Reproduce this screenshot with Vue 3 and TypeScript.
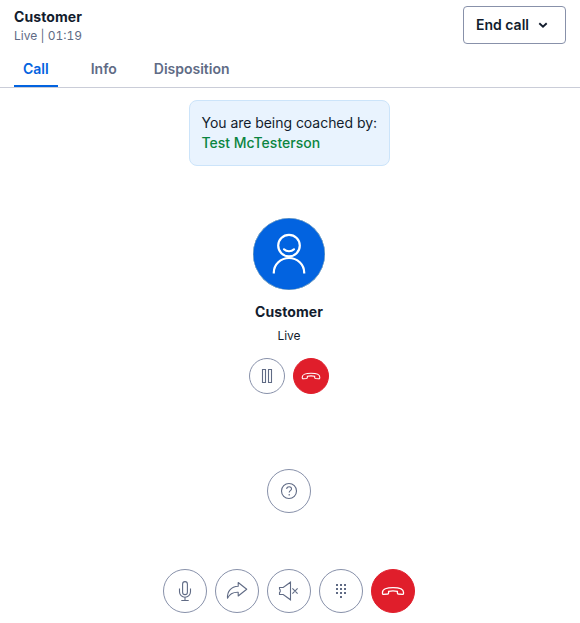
<script setup lang="ts">
import { ref } from 'vue'

const tabs: string[] = ['Call', 'Info', 'Disposition']
const activeTab = ref<string>('Call')
</script>

<template>
  <main class="panel">
    <header class="header">
      <div class="caller">
        <div class="caller-name">Customer</div>
        <div class="caller-status">Live | 01:19</div>
      </div>
      <button class="end-call" type="button">
        <span>End call</span>
        <svg width="10" height="8" viewBox="0 0 10 8" fill="none" stroke="currentColor" stroke-width="1.9">
          <path d="M1.3 2.2 5 5.6 8.7 2.2" />
        </svg>
      </button>
    </header>

    <nav class="tabs">
      <button
        v-for="tab in tabs"
        :key="tab"
        type="button"
        class="tab"
        :class="{ active: tab === activeTab }"
        @click="activeTab = tab"
      >{{ tab }}</button>
    </nav>

    <section class="body">
      <div class="notice">
        <div class="notice-text">You are being coached by:</div>
        <div class="coach">Test McTesterson</div>
      </div>

      <div class="avatar">
        <svg width="72" height="72" viewBox="0 0 72 72" fill="none" stroke="#fff" stroke-width="2.2">
          <circle cx="36" cy="27.6" r="10.8" />
          <path d="M31 31.3c2.6 2.6 7.4 2.6 10 0" stroke-linecap="round" />
          <path d="M20.8 55.6v-1a15.2 14.6 0 0 1 30.4 0v1" />
        </svg>
      </div>
      <div class="name">Customer</div>
      <div class="status">Live</div>

      <div class="row small-row">
        <button class="round small" type="button" aria-label="Hold">
          <svg width="24" height="24" viewBox="0 0 24 24">
            <path d="M7.5 5.5h3v13h-3zM13.5 5.5h3v13h-3z" />
          </svg>
        </button>
        <button class="round small danger" type="button" aria-label="Hang up">
          <svg width="20" height="20" viewBox="0 0 24 24">
            <path d="M1.5 13.2C1.5 10.2 5.7 8.6 12 8.6s10.5 1.6 10.5 4.6v1.2c0 .7-.5 1.1-1.2 1l-3.9-.4c-.6-.1-1-.5-1-1.1v-1.6c-2.7-.6-6.1-.6-8.8 0v1.6c0 .6-.4 1-1 1.1l-3.9.4c-.7.1-1.2-.3-1.2-1Z" />
          </svg>
        </button>
      </div>

      <button class="round help" type="button" aria-label="Help">
        <svg width="24" height="24" viewBox="0 0 24 24">
          <circle cx="12" cy="12" r="7.5" />
          <path d="M9.7 10.1c0-3.3 4.9-3.1 4.8-.1 0 1.7-2.3 1.5-2.3 3.4" />
          <path d="M12.2 15v1.4" />
        </svg>
      </button>

      <div class="row large-row">
        <button class="round" type="button" aria-label="Mute microphone">
          <svg width="24" height="24" viewBox="0 0 24 24">
            <rect x="9.6" y="2.6" width="4.8" height="13" rx="2.4" />
            <path d="M6.5 9.5v3.2a5.5 5.5 0 0 0 11 0V9.5M12 18.2v3.2M8.3 21.5h7.4" />
          </svg>
        </button>
        <button class="round" type="button" aria-label="Transfer">
          <svg width="24" height="24" viewBox="0 0 24 24" stroke-linejoin="round">
            <path d="M13.2 3.5 21.7 10.3 13.2 17v-3.8C8.5 13 4.5 15 2.5 19.3 2 12.5 6 7.7 13.2 7.3Z" />
          </svg>
        </button>
        <button class="round" type="button" aria-label="Mute speaker">
          <svg width="24" height="24" viewBox="0 0 24 24">
            <path d="M2.5 8.5h3.7l7.3-5.3v17.6l-7.3-5.3H2.5v-2l.7-.7v-2l-.7-.7ZM15.4 9.4l5.2 5.2M20.6 9.4l-5.2 5.2" />
          </svg>
        </button>
        <button class="round" type="button" aria-label="Keypad">
          <svg class="keypad" width="24" height="24" viewBox="0 0 24 24">
            <path d="M7 5h2v2H7zM11 5h2v2h-2zM15 5h2v2h-2zM7 9h2v2H7zM11 9h2v2h-2zM15 9h2v2h-2zM7 13h2v2H7zM11 13h2v2h-2zM15 13h2v2h-2zM11 17h2v2h-2z" />
          </svg>
        </button>
        <button class="round danger" type="button" aria-label="End call">
          <svg width="24" height="24" viewBox="0 0 24 24">
            <path d="M1.5 13.2C1.5 10.2 5.7 8.6 12 8.6s10.5 1.6 10.5 4.6v1.2c0 .7-.5 1.1-1.2 1l-3.9-.4c-.6-.1-1-.5-1-1.1v-1.6c-2.7-.6-6.1-.6-8.8 0v1.6c0 .6-.4 1-1 1.1l-3.9.4c-.7.1-1.2-.3-1.2-1Z" />
          </svg>
        </button>
      </div>
    </section>
  </main>
</template>

<style scoped>
.panel {
  box-sizing: border-box;
  height: 623px;
  background: #fff;
  color: #121c2d;
  font-family: Inter, "Liberation Sans", sans-serif;
  font-size: 14px;
  line-height: 20px;
}
button {
  box-sizing: border-box;
  margin: 0;
  padding: 0;
  border: 0;
  background: none;
  font: inherit;
  color: inherit;
}
.header {
  box-sizing: border-box;
  display: flex;
  justify-content: space-between;
  height: 50px;
  padding: 6px 14px 0;
}
.caller-name {
  padding-top: 1px;
  font-weight: 700;
  letter-spacing: 0.08px;
}
.caller-status {
  font-size: 12px;
  line-height: 18px;
  font-variant-numeric: tabular-nums;
  color: #606b85;
}
.end-call {
  display: flex;
  align-items: center;
  gap: 9px;
  width: 103px;
  height: 38px;
  padding-left: 12px;
  border: 1px solid #8891aa;
  border-radius: 4px;
  font-weight: 600;
}
.tabs {
  box-sizing: border-box;
  display: flex;
  gap: 15px;
  height: 38px;
  padding-left: 14px;
  border-bottom: 1px solid #cacdd8;
}
.tab {
  height: 37px;
  padding: 2px 9px 0;
  border-bottom: 2px solid transparent;
  font-weight: 600;
  color: #606b85;
}
.tab + .tab {
  padding: 2px 9px 0 18px;
}
.tab + .tab:last-child {
  padding-left: 13px;
}
.tab.active {
  color: #0263e0;
  border-color: #0263e0;
}
.body {
  box-sizing: border-box;
  display: flex;
  flex-direction: column;
  align-items: center;
  width: 578px;
  padding-top: 12px;
}
.notice {
  box-sizing: border-box;
  width: 201px;
  height: 66px;
  margin-left: 1px;
  padding: 12px 0 0 11.5px;
  border: 1px solid #cce4fa;
  border-radius: 8px;
  background: #e9f3fe;
  white-space: nowrap;
}
.notice-text {
  letter-spacing: -0.04px;
}
.coach {
  font-weight: 500;
  color: #0b8541;
}
.avatar {
  width: 72px;
  height: 72px;
  margin-top: 52px;
  border-radius: 50%;
  background: #0263e0;
  box-shadow: inset 0 0 0 0.5px #8aabb8;
}
svg {
  display: block;
}
.name {
  margin-top: 12px;
  font-weight: 700;
  letter-spacing: 0.08px;
}
.status {
  margin-top: 4px;
  font-size: 12px;
}
.row {
  display: flex;
  gap: 8px;
}
.small-row {
  margin-top: 12px;
}
.round {
  display: flex;
  align-items: center;
  justify-content: center;
  width: 44px;
  height: 44px;
  border: 1px solid #8891aa;
  border-radius: 50%;
  color: #606b85;
}
.round svg {
  fill: none;
  stroke: currentColor;
  stroke-width: 1.1;
}
.round .keypad {
  fill: currentColor;
  stroke: none;
}
.round.small {
  width: 36px;
  height: 36px;
}
.round.danger {
  border-color: #e01e2b;
  background: #e01e2b;
  color: #fff;
}
.round.danger svg {
  stroke-width: 1.3;
}
.help {
  margin-top: 75px;
}
.large-row {
  margin-top: 56px;
}
</style>
